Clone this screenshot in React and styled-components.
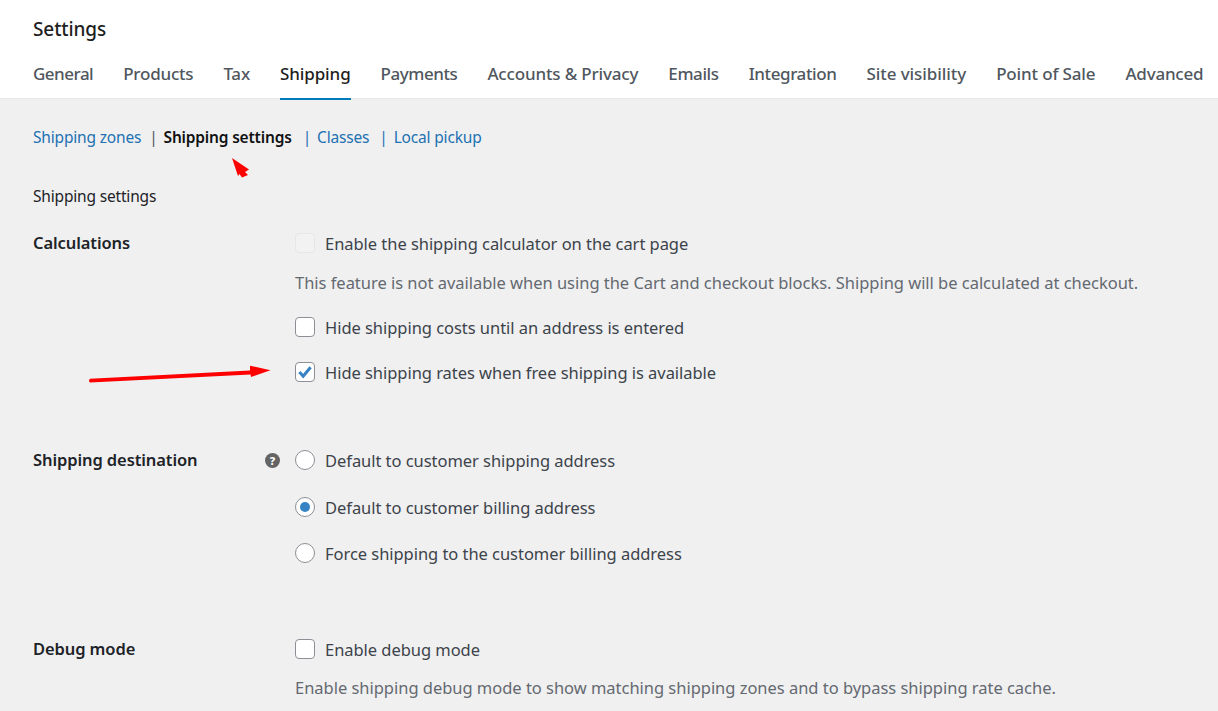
import React from 'react';
import styled, { createGlobalStyle } from 'styled-components';

const Global = createGlobalStyle`
  html, body { margin: 0; padding: 0; background: #f0f0f1; }
  body { font-family: "Noto Sans", "Open Sans", sans-serif; height: 711px; overflow: hidden; }
`;
const Page = styled.div`position: relative; width: 1218px; height: 711px; overflow: hidden; background: #f0f0f1;`;
const Header = styled.header`
  height: 99px; box-sizing: border-box; background: #fff; border-bottom: 1px solid #e6e6e6;
  padding: 17px 0 0 33px; display: flex; flex-direction: column;
`;
const Title = styled.h1`margin: 0; font-size: 19px; line-height: 24px; font-weight: 500; color: #1e1e1e; letter-spacing: -.1px;`;
const Tabs = styled.nav`display: flex; gap: 30px; margin-top: 17px; white-space: nowrap;`;
const Tab = styled.a`
  font-size: 17px; line-height: 32px; font-weight: 500; letter-spacing: ${p => p.$ls}px;
  color: ${p => (p.$active ? '#1e1e1e' : '#50575e')};
  height: 42px; box-sizing: border-box;
  border-bottom: 2px solid ${p => (p.$active ? '#007cba' : 'transparent')};
`;
const Sub = styled.div`display: flex; align-items: center; height: 22px; margin: 27px 0 0 33px; font-size: 15.5px; white-space: nowrap; letter-spacing: -.18px;`;
const SubLink = styled.a`color: ${p => (p.$current ? '#111' : '#2271b1')}; font-weight: ${p => (p.$current ? 600 : 400)}; margin-left: ${p => p.$ml || 0}px;`;
const Sep = styled.span`color: ${p => (p.$dark ? '#50575e' : '#2271b1')}; margin-left: ${p => p.$ml}px;`;
const Section = styled.p`margin: 37px 0 0 33px; font-size: 15.5px; line-height: 22px; color: #1d2327; letter-spacing: -.18px;`;
const Row = styled.section`display: grid; grid-template-columns: 262px 1fr; margin: ${p => p.$mt}px 0 0 33px;`;
const Label = styled.div`
  display: flex; justify-content: space-between; align-items: center; height: 24px; padding: 0 15px 2px 0;
  box-sizing: border-box; font-size: 16.5px; font-weight: 600; color: #1d2327; letter-spacing: -.1px;
`;
const Field = styled.div`display: flex; flex-direction: column;`;
const Option = styled.label`
  display: flex; align-items: center; gap: 10px; height: 24px; margin-top: ${p => p.$mt || 0}px;
  font-size: 16.5px; color: #3c434a; letter-spacing: -.045px; white-space: nowrap;
`;
const Box = styled.span`
  width: 20px; height: 20px; box-sizing: border-box; border-radius: 4px; flex: none;
  background: ${p => (p.$disabled ? '#f2f2f3' : '#fff')};
  border: 1px solid ${p => (p.$disabled ? '#e6e6e7' : '#8c8f94')};
  display: flex; align-items: center; justify-content: center;
`;
const Radio = styled.span`
  width: 20px; height: 20px; box-sizing: border-box; border-radius: 50%; flex: none; background: #fff;
  border: 1px solid #8c8f94; display: flex; align-items: center; justify-content: center;
  &::after { content: ""; width: 10px; height: 10px; border-radius: 50%; background: ${p => (p.$on ? '#3582c4' : 'transparent')}; }
`;
const Desc = styled.p`margin: ${p => p.$mt}px 0 0; font-size: 16.5px; line-height: 24px; color: #646970; letter-spacing: -.025px; white-space: nowrap;`;
const Help = styled.span`
  width: 15px; height: 15px; margin-top: 2px; border-radius: 50%; background: #646464; color: #fff; font-size: 11px; font-weight: 800;
  display: flex; align-items: center; justify-content: center; letter-spacing: 0;
`;
const Overlay = styled.svg`position: absolute; left: 0; top: 0; pointer-events: none;`;

const Check = () => (
  <svg width="16" height="16" viewBox="0 0 16 16" aria-hidden="true">
    <path d="M2.4 8 L6.2 12.2 L13.6 3.2" fill="none" stroke="#3582c4" strokeWidth="3" />
  </svg>
);

const tabs = [
  ['General', -0.5], ['Products', -0.22], ['Tax', -0.2], ['Shipping', -0.1], ['Payments', -0.45],
  ['Accounts & Privacy', -0.16], ['Emails', -0.4], ['Integration', -0.4], ['Site visibility', -0.08],
  ['Point of Sale', -0.15], ['Advanced', -0.22],
];

export default function App() {
  return (
    <Page>
      <Global />
      <Header>
        <Title>Settings</Title>
        <Tabs>{tabs.map(([t, ls]) => <Tab key={t} $ls={ls} $active={t === 'Shipping'}>{t}</Tab>)}</Tabs>
      </Header>
      <Sub>
        <SubLink>Shipping zones</SubLink>
        <Sep $dark $ml={8}>|</Sep>
        <SubLink $current $ml={6}>Shipping settings</SubLink>
        <Sep $ml={11}>|</Sep>
        <SubLink $ml={6}>Classes</SubLink>
        <Sep $ml={10}>|</Sep>
        <SubLink $ml={6}>Local pickup</SubLink>
      </Sub>
      <Section>Shipping settings</Section>
      <Row $mt={24}>
        <Label>Calculations</Label>
        <Field>
          <Option><Box $disabled />Enable the shipping calculator on the cart page</Option>
          <Desc $mt={16}>This feature is not available when using the Cart and checkout blocks. Shipping will be calculated at checkout.</Desc>
          <Option $mt={20}><Box />Hide shipping costs until an address is entered</Option>
          <Option $mt={21}><Box><Check /></Box>Hide shipping rates when free shipping is available</Option>
        </Field>
      </Row>
      <Row $mt={64}>
        <Label>Shipping destination<Help>?</Help></Label>
        <Field>
          <Option><Radio />Default to customer shipping address</Option>
          <Option $mt={23}><Radio $on />Default to customer billing address</Option>
          <Option $mt={22}><Radio />Force shipping to the customer billing address</Option>
        </Field>
      </Row>
      <Row $mt={72}>
        <Label>Debug mode</Label>
        <Field>
          <Option><Box />Enable debug mode</Option>
          <Desc $mt={15}>Enable shipping debug mode to show matching shipping zones and to bypass shipping rate cache.</Desc>
        </Field>
      </Row>
      <Overlay width="1218" height="711" viewBox="0 0 1218 711" aria-hidden="true">
        <path d="M90 378.8 L250 370.4 L250 365.7 L270.5 370.2 L251 377 L250.5 374.4 L90 382.6 Q88 380.6 90 378.8 Z" fill="#fe0000" />
        <path d="M232 158 L249 169.5 L245 172 L248 175 L242 177.5 L239.5 174 L238 176 Z" fill="#fe0000" />
      </Overlay>
    </Page>
  );
}
